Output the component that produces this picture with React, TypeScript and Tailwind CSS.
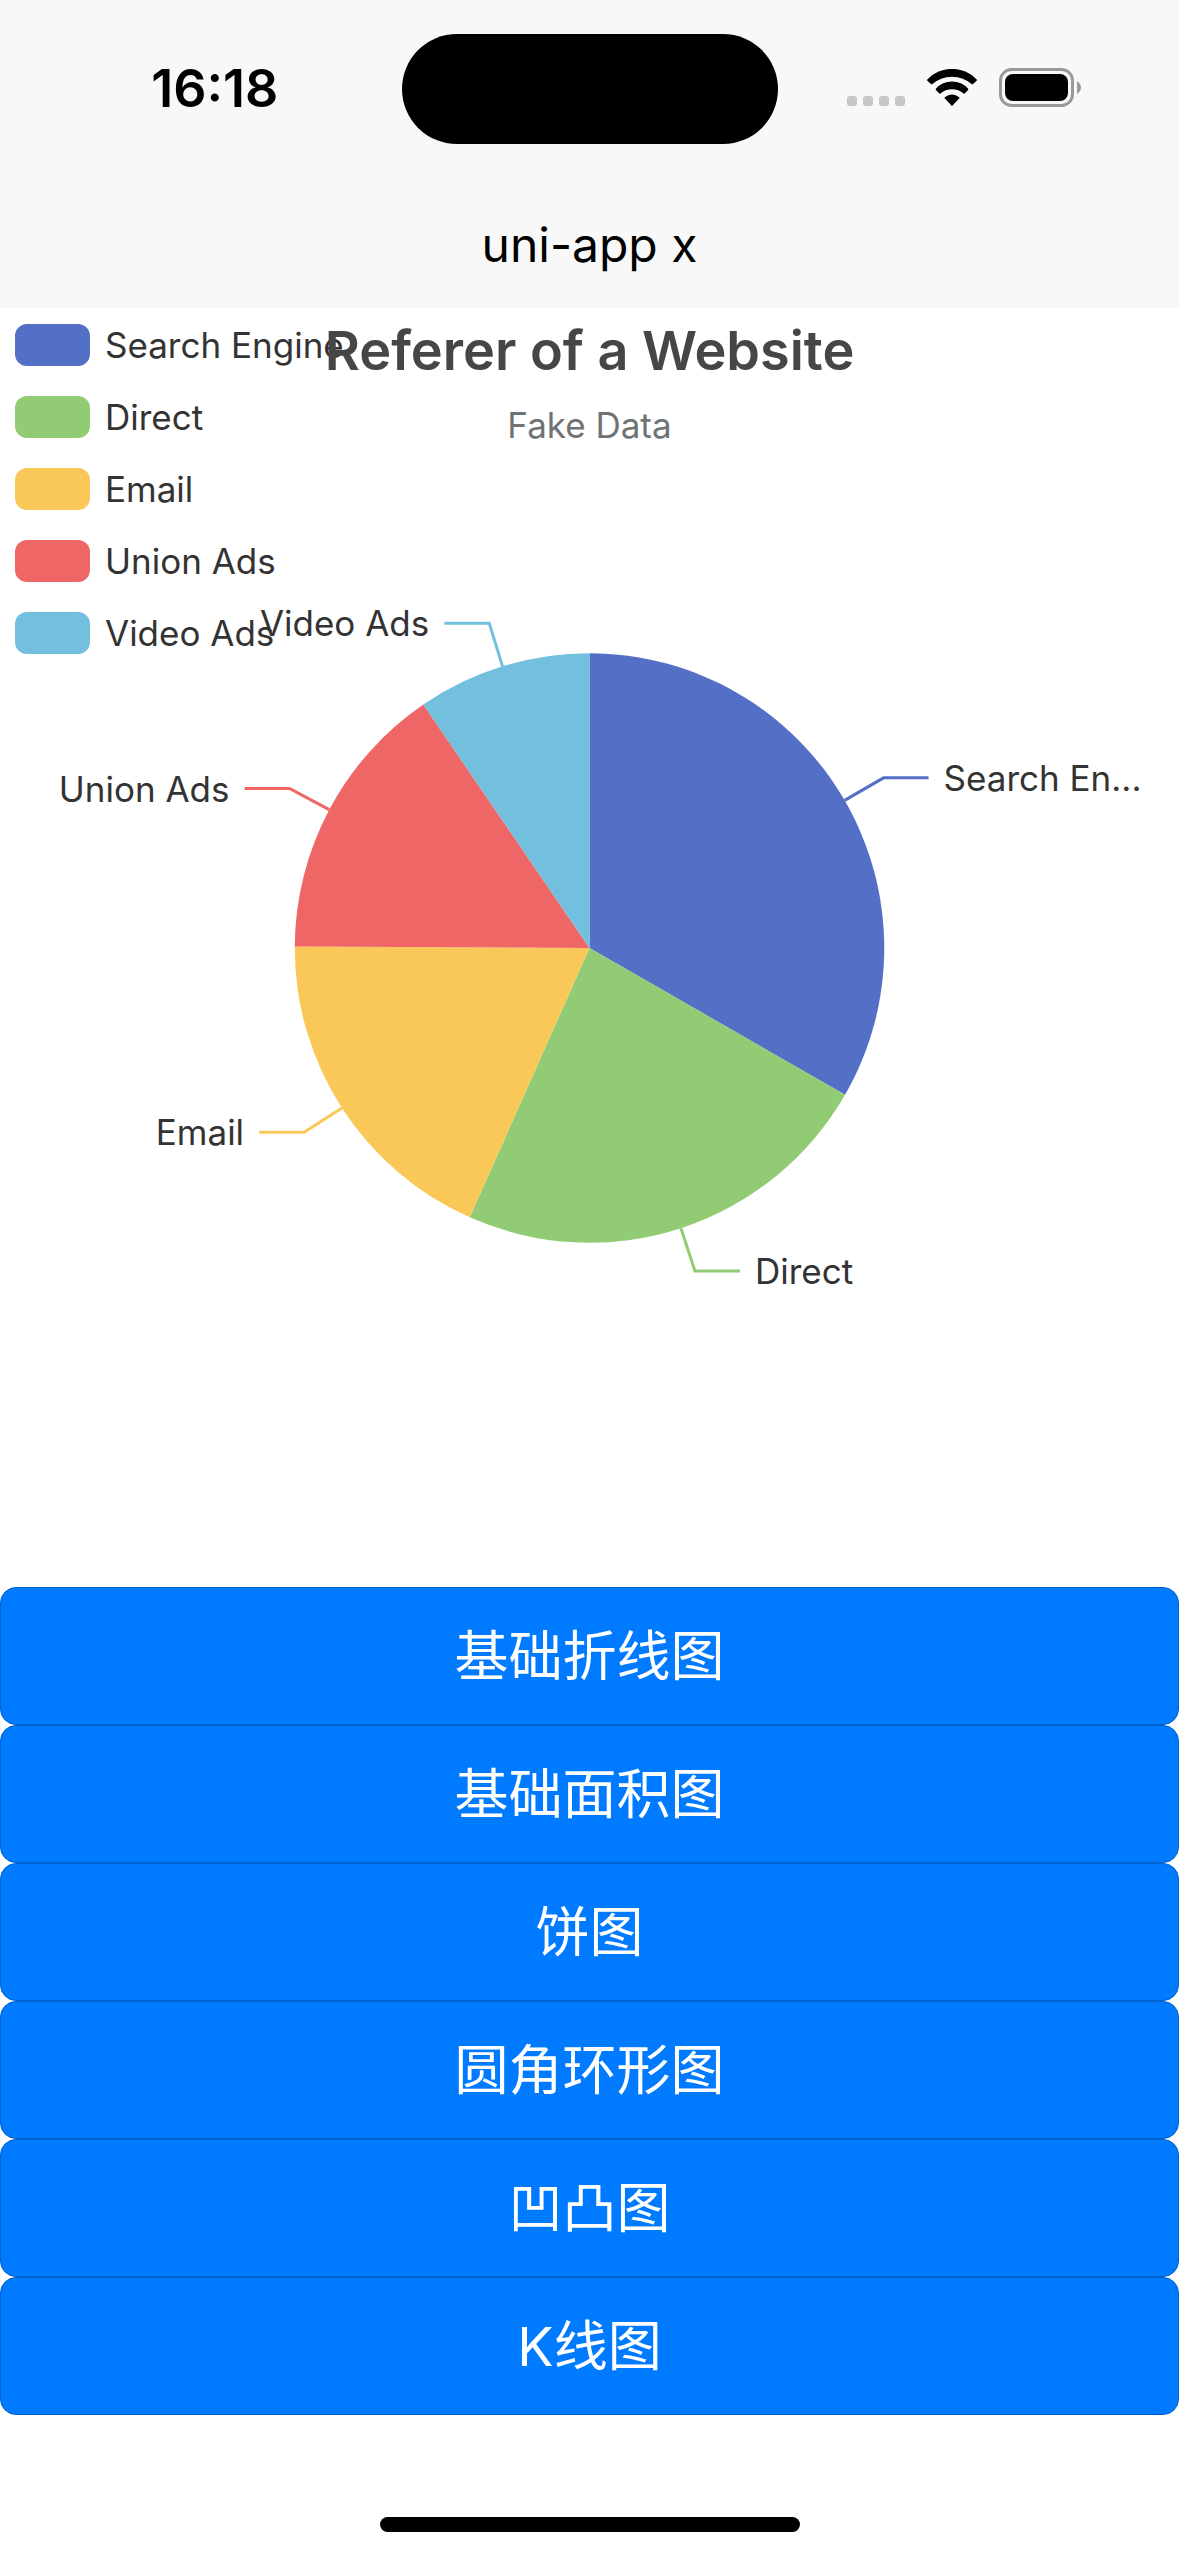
import React, { useState } from 'react';

type Slice = {
  name: string;
  label: string;
  value: number;
  color: string;
};

const slices: Slice[] = [
  { name: 'Search Engine', label: 'Search En...', value: 1048, color: '#5470c6' },
  { name: 'Direct', label: 'Direct', value: 735, color: '#91cc75' },
  { name: 'Email', label: 'Email', value: 580, color: '#fac858' },
  { name: 'Union Ads', label: 'Union Ads', value: 484, color: '#ee6666' },
  { name: 'Video Ads', label: 'Video Ads', value: 300, color: '#73c0de' }
];

const chartTypes = ['基础折线图', '基础面积图', '饼图', '圆角环形图', '凹凸图', 'K线图'];

const WIDTH = 1179;
const HEIGHT = 1279;
const CX = WIDTH / 2;
const CY = 640;
const RADIUS = WIDTH / 4;
const LINE_LENGTH = 45;

// angle is measured clockwise from 12 o'clock
const pointAt = (angle: number, r: number) => ({
  x: CX + r * Math.sin(angle),
  y: CY - r * Math.cos(angle)
});

const StatusBar: React.FC = () => (
  <div className="grid h-[177px] grid-cols-[1fr_376px_1fr] items-center">
    <time className="pl-7 text-center text-[52px] leading-[60px] font-semibold text-black">16:18</time>
    <div className="h-[110px] rounded-full bg-black" />
    <div className="flex items-center justify-center gap-[22px] pr-7 pb-[2px]">
      <div className="flex gap-[6px] self-end pb-px">
        {[0, 1, 2, 3].map((dot) => (
          <span key={dot} className="size-[10px] rounded-[3px] bg-[#c7c7c7]" />
        ))}
      </div>
      <svg className="h-[37px] w-[50px]" viewBox="0 0 151 111" fill="#000">
        <path d="M1 35Q-1 33 1 31A103 103 0 0 1 150 31Q152 33 150 35L138 46Q137 47 136 46A90.8 90.8 0 0 0 15 46Q14 47 13 46Z" />
        <path d="M27 63Q25 61 27 59A65 65 0 0 1 124 59Q126 61 124 63L113 74Q112 75 111 74A54.6 54.6 0 0 0 40 74Q39 75 38 74Z" />
        <path d="M54 89Q52 87 54 85A32 32 0 0 1 97 85Q99 87 97 89L77 110Q75.500 112 74 110Z" />
      </svg>
      <svg className="h-[39px] w-[82px]" viewBox="0 0 82 39">
        <rect x="1.500" y="1.500" width="72" height="36" rx="11" fill="none" stroke="#999" strokeWidth="3" />
        <rect x="6" y="6" width="63" height="27" rx="8" fill="#000" />
        <path d="M78 13Q82 16 82 19.500Q82 23 78 26Z" fill="#999" />
      </svg>
    </div>
  </div>
);

const PieChart: React.FC = () => {
  const total = slices.reduce((sum, slice) => sum + slice.value, 0);
  let start = 0;

  return (
    <svg viewBox={`0 0 ${WIDTH} ${HEIGHT}`} className="col-start-1 row-start-1 w-full">
      {slices.map((slice) => {
        const sweep = (slice.value / total) * Math.PI * 2;
        const mid = start + sweep / 2;
        const from = pointAt(start, RADIUS);
        const to = pointAt(start + sweep, RADIUS);
        const edge = pointAt(mid, RADIUS);
        const elbow = pointAt(mid, RADIUS + LINE_LENGTH);
        const side = elbow.x > CX ? 1 : -1;
        const end = elbow.x + side * LINE_LENGTH;
        start += sweep;

        return (
          <g key={slice.name}>
            <path
              d={`M${CX} ${CY}L${from.x} ${from.y}A${RADIUS} ${RADIUS} 0 0 1 ${to.x} ${to.y}Z`}
              fill={slice.color}
            />
            <polyline
              points={`${edge.x},${edge.y} ${elbow.x},${elbow.y} ${end},${elbow.y}`}
              fill="none"
              stroke={slice.color}
              strokeWidth={3}
            />
            <text
              x={end + side * 15}
              y={elbow.y + 13}
              textAnchor={side > 0 ? 'start' : 'end'}
              fill="#333"
              className="text-[35px]"
            >
              {slice.label}
            </text>
          </g>
        );
      })}
    </svg>
  );
};

export default function App() {
  const [active, setActive] = useState('饼图');

  return (
    <div className="flex min-h-screen flex-col bg-white font-[Inter,'Noto_Sans_CJK_SC',sans-serif]">
      <header className="bg-[#f8f8f8]">
        <StatusBar />
        <h1 className="pt-1 text-center text-[48px] leading-[127px] text-black">uni-app x</h1>
      </header>

      <main>
        {/* title, legend and pie share one grid cell */}
        <section className="grid">
          <PieChart />
          <ul className="col-start-1 row-start-1 flex flex-col gap-[30px] self-start justify-self-start pt-4 pl-[15px]">
            {slices.map((slice) => (
              <li key={slice.name} className="flex items-center gap-[15px]">
                <span className="h-[42px] w-[75px] rounded-xl" style={{ backgroundColor: slice.color }} />
                <span className="text-[35px] leading-[42px] text-[#333]">{slice.name}</span>
              </li>
            ))}
          </ul>
          <div className="col-start-1 row-start-1 flex flex-col items-center gap-7 self-start justify-self-center pt-4">
            <h2 className="text-[54px] leading-[54px] font-semibold text-[#464646]">Referer of a Website</h2>
            <p className="text-[35px] leading-[38px] text-[#707374]">Fake Data</p>
          </div>
        </section>

        <div className="flex flex-col">
          {chartTypes.map((type) => (
            <button
              key={type}
              type="button"
              aria-pressed={active === type}
              onClick={() => setActive(type)}
              className="w-full rounded-2xl border border-[#0062cc] bg-[#007aff] pt-[29px] pb-[27px] text-[54px] leading-[80px] text-white"
            >
              {type}
            </button>
          ))}
        </div>
      </main>

      <div className="mx-auto mt-auto mb-6 h-[15px] w-[420px] rounded-full bg-black" />
    </div>
  );
}
